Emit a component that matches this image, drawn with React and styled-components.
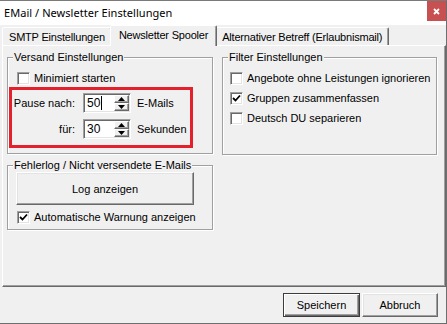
import React from 'react';
import styled, { createGlobalStyle } from 'styled-components';

const GlobalStyle = createGlobalStyle`
  html, body {
    margin: 0;
    padding: 0;
    background: #f0f0f0;
  }

  body {
    font-family: "Liberation Sans", Arial, sans-serif;
    font-size: 11px;
    color: #000;
  }
`;

const Window = styled.div`
  box-sizing: border-box;
  width: 447px;
  height: 324px;
  display: flex;
  flex-direction: column;
  background: #f0f0f0;
  border-top: 1px solid #7a7a7a;
  border-right: 1px solid #6e6e6e;
  border-bottom: 1px solid #6e6e6e;
  overflow: hidden;
`;

const TitleBar = styled.div`
  flex: none;
  height: 24px;
  display: flex;
  justify-content: space-between;
  background: #fff;
  padding-left: 4px;
`;

const Title = styled.span`
  align-self: center;
  margin-top: -1px;
  font-family: "Noto Sans", "Open Sans", sans-serif;
  font-size: 11px;
  letter-spacing: 0.05px;
`;

const CloseButton = styled.div`
  width: 19px;
  height: 20px;
  display: flex;
  align-items: center;
  justify-content: center;
  background: #c75050;
`;

const TabRow = styled.div`
  flex: none;
  height: 20px;
  display: flex;
  align-items: flex-end;
  padding-left: 2px;
`;

const Tab = styled.div`
  box-sizing: border-box;
  height: ${(p) => (p.$active ? '21px' : '18px')};
  margin: ${(p) => (p.$active ? '0 -2px -1px -2px' : '0')};
  position: relative;
  z-index: ${(p) => (p.$active ? 1 : 0)};
  display: flex;
  align-items: center;
  padding: ${(p) => (p.$active ? '0 8px 2px' : '1px 6px 0')};
  background: #f0f0f0;
  border: 1px solid;
  border-bottom: none;
  border-color: #fff #696969 transparent #fff;
  border-radius: 2px 2px 0 0;
  box-shadow: inset -1px 0 0 #a0a0a0;
  font-size: 11px;
  letter-spacing: -0.2px;
  white-space: nowrap;
`;

const Panel = styled.div`
  box-sizing: border-box;
  flex: none;
  height: 242px;
  margin-left: 2px;
  display: flex;
  gap: 9px;
  padding: 5px 0 0 4px;
  border: 1px solid;
  border-color: #fff #696969 #696969 #fff;
  box-shadow: inset -1px -1px 0 #a0a0a0;
`;

const Column = styled.div`
  display: flex;
  flex-direction: column;
  width: ${(p) => p.$width}px;
`;

const GroupBox = styled.div`
  box-sizing: border-box;
  height: ${(p) => p.$height}px;
  margin-top: ${(p) => p.$top || 6}px;
  padding: 0 0 0 ${(p) => p.$padLeft || 0}px;
  border: 1px solid #a0a0a0;
  box-shadow: inset 1px 1px 0 #fff, 1px 1px 0 #fff;
  display: flex;
  flex-direction: column;
  align-items: flex-start;
`;

const Legend = styled.div`
  margin: -7px 0 0 ${(p) => 5 - (p.$padLeft || 0)}px;
  padding: 0 1px;
  line-height: 13px;
  background: #f0f0f0;
  white-space: nowrap;
`;

const CheckRow = styled.label`
  display: flex;
  align-items: center;
  gap: 4px;
  height: 16px;
  margin-top: ${(p) => p.$top || 0}px;
  margin-left: ${(p) => p.$left || 0}px;
  white-space: nowrap;
`;

const Box = styled.span`
  box-sizing: border-box;
  width: 13px;
  height: 13px;
  display: flex;
  align-items: center;
  justify-content: center;
  background: #fff;
  border: 1px solid;
  border-color: #a0a0a0 #fff #fff #a0a0a0;
  box-shadow: inset 1px 1px 0 #696969, inset -1px -1px 0 #e3e3e3;
`;

const Highlight = styled.div`
  box-sizing: border-box;
  width: 184px;
  margin-top: 1px;
  padding: 3px 0 6px;
  border: 3px solid #e3202c;
  display: flex;
  flex-direction: column;
  gap: 6px;
`;

const SpinRow = styled.div`
  display: grid;
  grid-template-columns: 65px 48px auto;
  column-gap: 6px;
  align-items: center;
  height: 20px;
  white-space: nowrap;

  & > span:first-child {
    text-align: right;
    padding-right: 2px;
  }
`;

const SpinBox = styled.div`
  box-sizing: border-box;
  width: 48px;
  height: 20px;
  display: flex;
  align-items: stretch;
  padding: 1px;
  background: #fff;
  border: 1px solid;
  border-color: #a0a0a0 #fff #fff #a0a0a0;
  box-shadow: inset 1px 1px 0 #696969, inset -1px -1px 0 #e3e3e3;
`;

const SpinValue = styled.div`
  flex: 1;
  display: flex;
  align-items: center;
  padding-left: 2px;
  font-size: 12px;
`;

const Caret = styled.span`
  width: 1px;
  height: 14px;
  margin-left: 1px;
  background: #000;
`;

const SpinButtons = styled.div`
  width: 15px;
  display: flex;
  flex-direction: column;
`;

const SpinButton = styled.div`
  box-sizing: border-box;
  flex: 1;
  display: flex;
  align-items: center;
  justify-content: center;
  background: #f0f0f0;
  border: 1px solid;
  border-color: #fff #696969 #696969 #fff;
  box-shadow: inset -1px -1px 0 #a0a0a0;
`;

const PushButton = styled.button`
  box-sizing: border-box;
  width: ${(p) => p.$width}px;
  height: ${(p) => p.$height}px;
  padding: 0;
  font-family: "Liberation Sans", Arial, sans-serif;
  font-size: 11px;
  color: #000;
  background: #f0f0f0;
  border: 1px solid;
  border-color: ${(p) => (p.$default ? '#3c3c3c' : '#fff #696969 #696969 #fff')};
  box-shadow: ${(p) =>
    p.$default
      ? 'inset 1px 1px 0 #fff, inset -1px -1px 0 #696969, inset -2px -2px 0 #a0a0a0'
      : 'inset -1px -1px 0 #a0a0a0, inset 1px 1px 0 #e3e3e3'};
`;

const Footer = styled.div`
  flex: 1;
  display: flex;
  justify-content: flex-end;
  align-items: flex-start;
  gap: 2px;
  padding: 6px 8px 0 0;
`;

const Check = () => (
  <svg width="9" height="9" viewBox="0 0 9 9">
    <polyline points="1,4 3.5,6.5 8,1.5" fill="none" stroke="#000" strokeWidth="1.8" />
  </svg>
);

const Arrow = ({ up }) => (
  <svg width="7" height="4" viewBox="0 0 7 4">
    <polygon points={up ? '0,4 7,4 3.5,0' : '0,0 7,0 3.5,4'} fill="#000" />
  </svg>
);

const CheckBox = ({ checked, label, top, left }) => (
  <CheckRow $top={top} $left={left}>
    <Box>{checked && <Check />}</Box>
    <span>{label}</span>
  </CheckRow>
);

const Spinner = ({ label, value, unit, caret }) => (
  <SpinRow>
    <span>{label}</span>
    <SpinBox>
      <SpinValue>
        {value}
        {caret && <Caret />}
      </SpinValue>
      <SpinButtons>
        <SpinButton>
          <Arrow up />
        </SpinButton>
        <SpinButton>
          <Arrow />
        </SpinButton>
      </SpinButtons>
    </SpinBox>
    <span>{unit}</span>
  </SpinRow>
);

const filters = [
  { label: 'Angebote ohne Leistungen ignorieren', checked: false },
  { label: 'Gruppen zusammenfassen', checked: true },
  { label: 'Deutsch DU separieren', checked: false }
];

const App = () => (
  <>
    <GlobalStyle />
    <Window>
      <TitleBar>
        <Title>EMail / Newsletter Einstellungen</Title>
        <CloseButton>
          <svg width="7" height="7" viewBox="0 0 7 7">
            <path d="M1 1 L6 6 M6 1 L1 6" stroke="#fff" strokeWidth="1.8" />
          </svg>
        </CloseButton>
      </TitleBar>

      <TabRow>
        <Tab>SMTP Einstellungen</Tab>
        <Tab $active>Newsletter Spooler</Tab>
        <Tab>Alternativer Betreff (Erlaubnismail)</Tab>
      </TabRow>

      <Panel>
        <Column $width={206}>
          <GroupBox $height={97} $padLeft={1}>
            <Legend $padLeft={1}>Versand Einstellungen</Legend>
            <CheckBox label="Minimiert starten" top={6} left={8} />
            <Highlight>
              <Spinner label="Pause nach:" value="50" unit="E-Mails" caret />
              <Spinner label="für:" value="30" unit="Sekunden" />
            </Highlight>
          </GroupBox>

          <GroupBox $height={65} $top={11} $padLeft={8}>
            <Legend $padLeft={8}>Fehlerlog / Nicht versendete E-Mails</Legend>
            <PushButton $width={178} $height={33}>
              Log anzeigen
            </PushButton>
            <CheckBox label="Automatische Warnung anzeigen" checked top={4} left={1} />
          </GroupBox>
        </Column>

        <Column $width={215}>
          <GroupBox $height={98} $padLeft={7}>
            <Legend $padLeft={7}>Filter Einstellungen</Legend>
            {filters.map((f, i) => (
              <CheckBox key={f.label} label={f.label} checked={f.checked} top={i === 0 ? 6 : 4} />
            ))}
          </GroupBox>
        </Column>
      </Panel>

      <Footer>
        <PushButton $width={77} $height={24} $default>
          Speichern
        </PushButton>
        <PushButton $width={76} $height={24}>
          Abbruch
        </PushButton>
      </Footer>
    </Window>
  </>
);

export default App;
